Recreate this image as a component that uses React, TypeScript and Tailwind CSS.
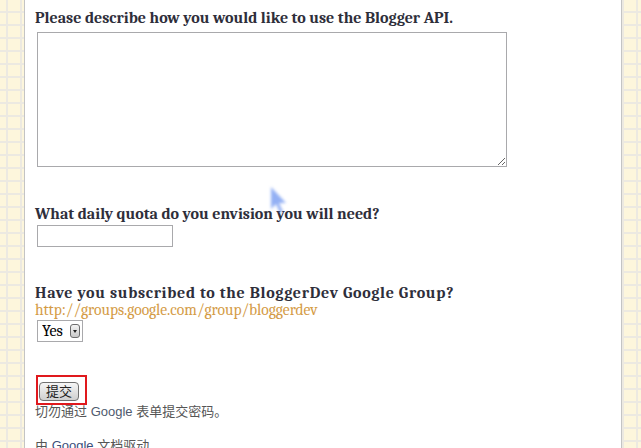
import React from 'react';

const serif = "font-['Cambria','Liberation_Serif','DejaVu_Serif',serif]";
const cjk = "font-['Liberation_Sans','Noto_Sans_CJK_SC',sans-serif]";

function Question({ title, wide, children }: { title: string; wide?: boolean; children?: React.ReactNode }) {
  return (
    <div>
      <div className={`${serif} text-[16px] font-bold leading-[18px] text-[#2e2e3a] ${wide ? 'tracking-[0.7px]' : ''}`}>{title}</div>
      {children}
    </div>
  );
}

export default function App() {
  return (
    <div className="w-[641px] h-[448px] overflow-hidden bg-[#fdf6dc] bg-[linear-gradient(to_right,#ece9e1_2px,transparent_2px),linear-gradient(to_bottom,#ece9e1_2px,transparent_2px)] bg-size-[14px_13px] bg-position-[6px_11px]">
      <div className="relative ml-[24px] w-[598px] h-full bg-white border-x border-[#c4c4c4] pl-[10px] pt-[9px]">
        <Question title="Please describe how you would like to use the Blogger API.">
          <textarea className="mt-[5px] ml-[2px] block w-[470px] h-[135px] border border-[#a9a9ac] bg-white" />
        </Question>

        <div className="mt-[38px]">
          <Question title="What daily quota do you envision you will need?">
            <input className="mt-[2px] ml-[2px] block w-[136px] h-[22px] border border-[#a9a9ac] bg-white" />
          </Question>
        </div>

        <div className="mt-[37px]">
          <Question title="Have you subscribed to the BloggerDev Google Group?" wide>
            <div className={`${serif} text-[15.5px] leading-[16px] text-[#d49b45]`}>
              http://groups.google.com/group/bloggerdev
            </div>
            <div className="relative mt-[2px] ml-[2px] w-[46px] h-[22px] border border-[#a9a9ac] bg-white">
              <select className={`${serif} appearance-none block w-full h-full pl-[4px] text-[16px] leading-[20px] text-black bg-transparent`}>
                <option>Yes</option>
                <option>No</option>
              </select>
              <span className="pointer-events-none absolute right-[2px] top-[3px] w-[10px] h-[14px] rounded-[3px] border border-[#6d6d6d] bg-gradient-to-b from-[#f4f4f4] to-[#c9c9c9] flex items-center justify-center">
                <span className="w-0 h-0 border-x-[2px] border-x-transparent border-t-[3px] border-t-[#222]" />
              </span>
            </div>
          </Question>
        </div>

        <div className="mt-[33px] ml-[1px] w-[51px] h-[30px] border-2 border-[#e0191d] pl-[1px] pt-[5px]">
          <button className={`${cjk} block w-[40px] h-[19px] rounded-[4px] border border-[#707070] bg-gradient-to-b from-[#f6f6f6] to-[#cfcfcf] text-[13px] leading-[15px] text-[#222]`}>
            提交
          </button>
        </div>

        <div className={`${cjk} text-[13px] leading-[16px] text-[#555] mt-[-1px]`}>
          切勿通过 <span className="text-[#505a6e]">Google</span> 表单提交密码。
        </div>
        <div className={`${cjk} text-[13px] leading-[16px] text-[#555] mt-[18px]`}>
          由 <span className="text-[#3b4e7a]">Google</span> 文档驱动
        </div>

        <svg className="absolute left-[242px] top-[185px] blur-[1.5px]" width="22" height="30" viewBox="0 0 22 30">
          <path d="M4 2 L4 24 L9 19 L13 28 L16 27 L12 18 L19 18 Z" fill="#6f95f0" opacity="0.75" />
        </svg>
      </div>
    </div>
  );
}
